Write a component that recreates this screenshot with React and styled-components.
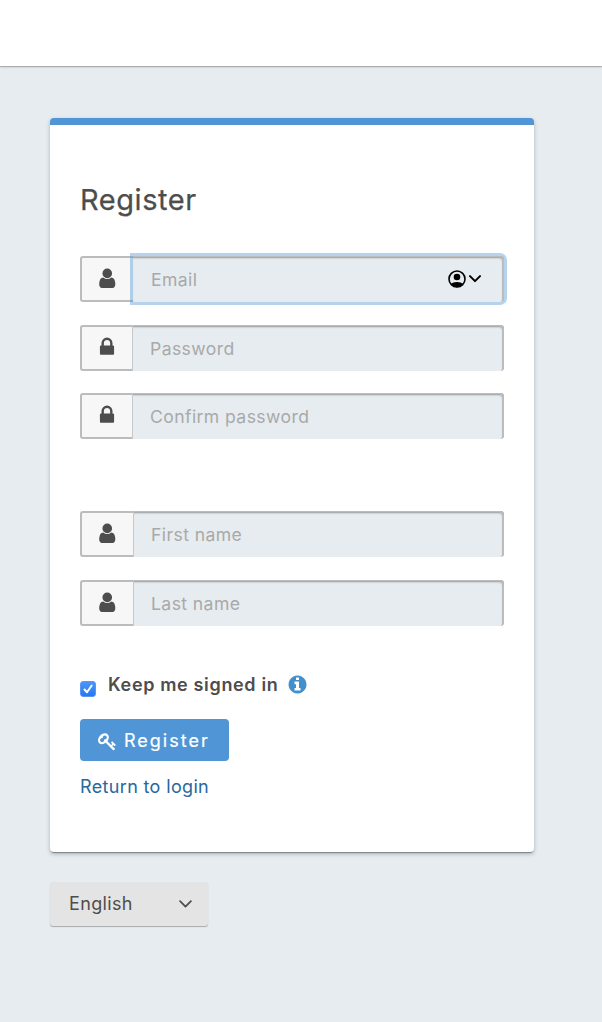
import React from "react";
import styled, { createGlobalStyle, css } from "styled-components";

const GlobalStyle = createGlobalStyle`
  *, *::before, *::after { box-sizing: border-box; }
  body {
    margin: 0;
    background: #e7ecf0;
    color: #4d4d4d;
    font-family: Inter, "Liberation Sans", sans-serif;
    font-size: 18px;
    line-height: 26px;
  }
`;

const Page = styled.div`
  min-height: 1022px;
`;

const TopBar = styled.header`
  height: 66px;
  background: #fff;
  box-shadow: 0 1px 1px rgba(0, 0, 0, 0.2), 0 1px 3px rgba(0, 0, 0, 0.12);
`;

const Content = styled.main`
  width: 484px;
  margin: 52px 0 0 50px;
`;

const Card = styled.section`
  height: 734px;
  padding: 55px 30px 0;
  background: #fff;
  border-top: 7px solid #5096d6;
  border-radius: 4px;
  box-shadow: 0 2px 1px -1px rgba(30, 40, 50, 0.4), 0 2px 4px rgba(30, 40, 50, 0.3);
`;

const Title = styled.h1`
  height: 40px;
  margin: 0 0 36px;
  font-size: 29px;
  font-weight: 400;
  line-height: 40px;
  letter-spacing: 0.55px;
  -webkit-text-stroke: 0.25px currentColor;
`;

const Field = styled.div`
  display: flex;
  height: 46px;
  margin-bottom: ${(p) => p.$gap}px;
`;

const Addon = styled.span`
  flex: none;
  display: flex;
  justify-content: center;
  width: ${(p) => (p.$wide ? 53 : 52)}px;
  padding: 9px 1px 0 0;
  background: #f7f7f7;
  border: 2px solid #bcbcbc;
  border-right: 0;
  border-radius: 3px 0 0 3px;
`;

const Input = styled.input`
  flex: 1;
  min-width: 0;
  height: 46px;
  padding: 0 0 0 17px;
  border: 0;
  border-left: 1px solid #c6c9cb;
  border-radius: 0 4px 4px 0;
  outline: 0;
  background: transparent;
  color: #4d4d4d;
  font: inherit;
  font-size: 17.6px;
  letter-spacing: 0.4px;
  &::placeholder { color: #a9a9a9; opacity: 1; }
`;

const InputBox = styled.div`
  flex: 1;
  display: flex;
  align-items: center;
  height: 46px;
  background: #e7ecf0;
  border-radius: 0 4px 4px 0;
  box-shadow: inset -2px 1px 0 #bcbcbc, inset 0 1px 0 #a2a5a7, inset -1px 2px 2px #94989b;
  ${(p) =>
    p.$focused &&
    css`
      padding: 0 23px 0 0;
      box-shadow: inset -2px 1px 0 #bcbcbc, inset 0 1px 0 #a2a5a7, inset -1px 2px 2px #94989b,
        0 0 0 3px rgba(80, 150, 214, 0.42);
      ${Input} { border-left-color: transparent; }
    `}
`;

const AutofillHint = styled.span`
  display: flex;
  align-items: center;
  gap: 3px;
`;

const Remember = styled.label`
  display: flex;
  align-items: center;
  height: 26px;
  margin-top: 46px;
  font-weight: 600;
  letter-spacing: 0.65px;
`;

const Check = styled.span`
  display: flex;
  width: 16px;
  height: 16px;
  margin: 7px 12px 0 0;
  border: 1px solid #5b96f2;
  border-radius: 3px;
  background: linear-gradient(#4b94f8, #2878f5);
`;

const Info = styled.span`
  display: flex;
  margin: 0 0 2px 9px;
  color: #428fcb;
`;

const Submit = styled.button`
  display: flex;
  align-items: center;
  width: 149px;
  height: 42px;
  margin: 21px 0 13px;
  padding: 2px 0 0 18px;
  gap: 7px;
  border: 0;
  border-radius: 4px;
  background: #5096d6;
  color: #fff;
  font: inherit;
  font-weight: 400;
  letter-spacing: 2px;
  -webkit-text-stroke: 0.2px currentColor;
`;

const Link = styled.a`
  color: #27679f;
  letter-spacing: 0.35px;
  text-decoration: none;
`;

const Language = styled.button`
  display: flex;
  align-items: center;
  justify-content: space-between;
  width: 158px;
  height: 44px;
  margin-top: 30px;
  padding: 0 16px 0 19px;
  border: 0;
  border-radius: 3px;
  background: #e4e4e4;
  box-shadow: 0 1px 1px rgba(0, 0, 0, 0.28);
  color: #4d4d4d;
  font: inherit;
  letter-spacing: 0.35px;
`;

const glyphs = {
  user: "M1536 1399q0 109-62.5 187t-150.5 78h-854q-88 0-150.5-78t-62.5-187q0-85 8.5-160.5t31.5-152 58.5-131 94-89 134.5-34.5q131 128 313 128t313-128q76 0 134.5 34.5t94 89 58.5 131 31.5 152 8.5 160.5zm-256-887q0 159-112.5 271.5t-271.5 112.5-271.5-112.5-112.5-271.5 112.5-271.5 271.5-112.5 271.5 112.5 112.5 271.5z",
  lock: "M640 768h512v-192q0-106-75-181t-181-75-181 75-75 181v192zm832 96v576q0 40-28 68t-68 28h-960q-40 0-68-28t-28-68v-576q0-40 28-68t68-28h32v-192q0-184 132-316t316-132 316 132 132 316v192h32q40 0 68 28t28 68z",
  info: "M1152 1376v-160q0-14-9-23t-23-9h-96v-512q0-14-9-23t-23-9h-320q-14 0-23 9t-9 23v160q0 14 9 23t23 9h96v320h-96q-14 0-23 9t-9 23v160q0 14 9 23t23 9h448q14 0 23-9t9-23zm-128-896v-160q0-14-9-23t-23-9h-192q-14 0-23 9t-9 23v160q0 14 9 23t23 9h192q14 0 23-9t9-23zm640 416q0 209-103 385.5t-279.5 279.5-385.5 103-385.5-103-279.5-279.5-103-385.5 103-385.5 279.5-279.5 385.5-103 385.5 103 279.5 279.5 103 385.5z",
  key: "M832 512q0-80-56-136t-136-56-136 56-56 136q0 42 19 83-41-19-83-19-80 0-136 56t-56 136 56 136 136 56 136-56 56-136q0-42-19-83 41 19 83 19 80 0 136-56t56-136zm851 704q0 17-49 66t-66 49q-9 0-28.5-16t-36.5-33-38.5-40-24.5-26l-96 96 220 220q28 28 28 68 0 42-39 81t-81 39q-40 0-68-28l-671-671q-176 131-365 131-163 0-265.5-102.5t-102.5-265.5q0-160 95-313t248-248 313-95q163 0 265.5 102.5t102.5 265.5q0 189-131 365l355 355 96-96q-3-3-26-24.5t-40-38.5-33-36.5-16-28.5q0-17 49-66t66-49q13 0 23 10 6 6 46 44.5t82 79.5 86.5 86 73 78 28.5 41z",
};

const Glyph = ({ name, size = 22 }) => (
  <svg width={size} height={size} viewBox="0 0 1792 1792" fill="currentColor" aria-hidden="true">
    <path d={glyphs[name]} />
  </svg>
);

const Chevron = ({ width, stroke, color }) => (
  <svg width={width} height={(width * 8) / 12} viewBox="0 0 12 8" fill="none" stroke={color} strokeWidth={stroke} strokeLinecap="round" strokeLinejoin="round">
    <path d="M1 1.1 6 6.1 11 1.1" />
  </svg>
);

const fields = [
  { icon: "user", label: "Email", type: "email", focused: true, gap: 23 },
  { icon: "lock", label: "Password", type: "password", gap: 22 },
  { icon: "lock", label: "Confirm password", type: "password", gap: 72 },
  { icon: "user", label: "First name", type: "text", gap: 23 },
  { icon: "user", label: "Last name", type: "text", gap: 0 },
];

export default function App() {
  return (
    <Page>
      <GlobalStyle />
      <TopBar />
      <Content>
        <Card>
          <Title>Register</Title>
          {fields.map((f) => (
            <Field key={f.label} $gap={f.gap}>
              <Addon $wide={f.icon === "user"}>
                <Glyph name={f.icon} size={f.icon === "user" ? 22.5 : 22} />
              </Addon>
              <InputBox $focused={f.focused}>
                <Input type={f.type} placeholder={f.label} />
                {f.focused && (
                  <AutofillHint>
                    <svg width="18" height="18" viewBox="0 0 18 18">
                      <circle cx="9" cy="9" r="8" fill="none" stroke="#000" strokeWidth="1.6" />
                      <circle cx="9" cy="7" r="3.3" />
                      <path d="M2.8 14Q4.8 12 9 12t6.2 2Q12.8 17.2 9 17.2T2.8 14z" />
                    </svg>
                    <Chevron width={12} stroke={2} color="#000" />
                  </AutofillHint>
                )}
              </InputBox>
            </Field>
          ))}
          <Remember>
            <Check>
              <svg width="14" height="14" viewBox="0 0 14 14" fill="none" stroke="#fff" strokeWidth="2" strokeLinecap="round" strokeLinejoin="round">
                <path d="M3.5 7.5 6 10.2 10.7 3.5" />
              </svg>
            </Check>
            Keep me signed in
            <Info><Glyph name="info" size={21} /></Info>
          </Remember>
          <Submit type="button">
            <Glyph name="key" size={19} />
            Register
          </Submit>
          <Link>Return to login</Link>
        </Card>
        <Language type="button">
          English
          <Chevron width={13} stroke={1.6} color="#4d4d4d" />
        </Language>
      </Content>
    </Page>
  );
}
